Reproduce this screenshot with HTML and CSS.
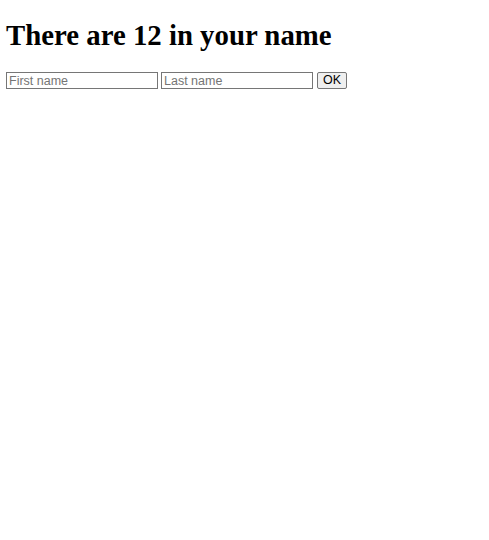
FILE: index.html
```html
<!DOCTYPE html>
<html>
<head>
<meta charset="utf-8">
<link rel="stylesheet" href="styles.css">
</head>
<body class="page">
<h1 class="title">There are 12 in your name</h1>
<form class="name-form">
<input class="field" type="text" placeholder="First name">
<input class="field" type="text" placeholder="Last name">
<button class="ok" type="button">OK</button>
</form>
</body>
</html>
```
FILE: styles.css
```css
html, body {
  background: #fff;
}
.page {
  margin: 0;
  padding: 19px 6px 0 6px;
  font-family: "Liberation Serif", serif;
}
.title {
  font-family: "Liberation Serif", serif;
  font-size: 28.8px;
  line-height: 32px;
  font-weight: bold;
  color: #000;
  margin: 0 0 21px 0;
}
.name-form {
  margin: 0;
  display: flex;
  align-items: flex-start;
  gap: 3px;
}
.field {
  box-sizing: border-box;
  width: 152px;
  height: 17px;
  margin: 0;
  padding: 0 2px;
  border: 1px solid #767676;
  border-radius: 0;
  font-family: "Liberation Sans", Arial, sans-serif;
  font-size: 12.5px;
  color: #000;
  background: #fff;
  outline: none;
}
.field::placeholder {
  color: #757575;
}
.ok {
  box-sizing: border-box;
  width: 30px;
  height: 17px;
  margin: 0 0 0 1px;
  padding: 0 4px;
  border: 1px solid #767676;
  border-radius: 2px;
  background: #efefef;
  color: #000;
  font-family: "Liberation Sans", Arial, sans-serif;
  font-size: 12.5px;
  line-height: 15px;
}
```
